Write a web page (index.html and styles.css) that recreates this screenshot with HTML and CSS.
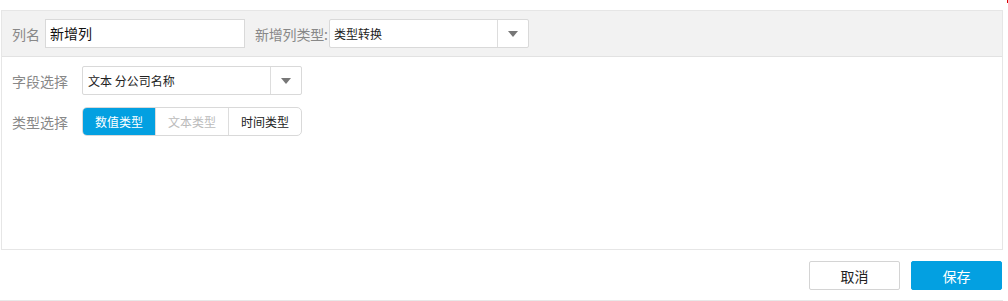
FILE: index.html
```html
<!DOCTYPE html>
<html lang="zh">
<head>
    <meta charset="UTF-8">
    <title>新增列</title>
    <link rel="stylesheet" href="styles.css">
</head>
<body>
    <div class="corner-mark"></div>
    <div class="panel">
        <div class="panel-head">
            <span class="label">列名</span>
            <div class="input name-input">新增列</div>
            <span class="label type-label">新增列类型:</span>
            <div class="select head-select">
                <span class="select-text">类型转换</span>
                <span class="select-arrow"><i class="tri"></i></span>
            </div>
        </div>
        <div class="panel-body">
            <div class="row">
                <span class="label row-label">字段选择</span>
                <div class="select field-select">
                    <span class="select-text">文本 分公司名称</span>
                    <span class="select-arrow"><i class="tri"></i></span>
                </div>
            </div>
            <div class="row">
                <span class="label row-label">类型选择</span>
                <div class="segments">
                    <div class="seg active">数值类型</div>
                    <div class="seg disabled">文本类型</div>
                    <div class="seg">时间类型</div>
                </div>
            </div>
        </div>
    </div>
    <div class="footer">
        <button class="btn btn-cancel">取消</button>
        <button class="btn btn-save">保存</button>
    </div>
</body>
</html>
```

FILE: styles.css
```css
body {
    margin: 0;
    padding: 10px 0 10px 1px;
    width: 1003px;
    box-sizing: border-box;
    font-family: "Noto Sans CJK SC", "Liberation Sans", sans-serif;
    font-size: 14px;
    color: #333;
    background: #fff;
    border-bottom: 2px solid #e8e8e8;
}
.corner-mark {
    position: absolute;
    left: 1007px;
    top: 0;
    width: 1px;
    height: 3px;
    background: #d00;
}
.panel {
    border: 1px solid #e6e6e6;
    height: 240px;
    box-sizing: border-box;
}
.panel-head {
    background: #f2f2f2;
    border-bottom: 1px solid #e2e2e2;
    height: 46px;
    box-sizing: border-box;
    display: flex;
    align-items: center;
    padding: 0 0 0 10px;
}
.label {
    color: #888;
    font-size: 14px;
    white-space: nowrap;
}
.input {
    margin-left: 5px;
    width: 200px;
    height: 29px;
    box-sizing: border-box;
    border: 1px solid #d9d9d9;
    background: #fff;
    padding-left: 4px;
    font-size: 14px;
    color: #111;
    line-height: 27px;
}
.type-label {
    margin-left: 10px;
    width: 74px;
    letter-spacing: -0.2px;
}
.select {
    display: flex;
    height: 29px;
    box-sizing: border-box;
    border: 1px solid #d9d9d9;
    border-radius: 2px;
    background: #fff;
    font-size: 12px;
    color: #222;
}
.select-text {
    flex: 1;
    padding-left: 4px;
    line-height: 27px;
}
.select-arrow {
    width: 30px;
    border-left: 1px solid #ddd;
    display: flex;
    align-items: center;
    justify-content: center;
}
.tri {
    width: 0;
    height: 0;
    border-left: 5px solid transparent;
    border-right: 5px solid transparent;
    border-top: 6px solid #777;
}
.head-select {
    width: 200px;
}
.panel-body {
    padding: 9px 0 0 10px;
}
.row {
    display: flex;
    align-items: center;
    margin-bottom: 12px;
}
.row-label {
    width: 70px;
}
.field-select {
    width: 220px;
}
.field-select .select-text {
    padding-left: 5px;
}
.segments {
    display: flex;
    width: 220px;
    height: 29px;
    box-sizing: border-box;
    border: 1px solid #d9d9d9;
    border-radius: 5px;
    overflow: hidden;
    font-size: 12px;
}
.seg {
    flex: 1;
    text-align: center;
    line-height: 27px;
    color: #222;
    border-left: 1px solid #ddd;
}
.seg:first-child {
    border-left: none;
}
.seg.active {
    background: #03a0e1;
    color: #fff;
}
.seg.disabled {
    color: #bbb;
}
.footer {
    display: flex;
    justify-content: flex-end;
    gap: 11px;
    margin-top: 11px;
    padding-right: 1px;
}
.btn {
    width: 91px;
    height: 29px;
    border-radius: 2px;
    font-family: inherit;
    font-size: 14px;
    padding: 0;
    cursor: pointer;
}
.btn-cancel {
    background: #fff;
    border: 1px solid #d4d4d4;
    color: #222;
}
.btn-save {
    background: #03a0e1;
    border: 1px solid #03a0e1;
    color: #fff;
}
```
